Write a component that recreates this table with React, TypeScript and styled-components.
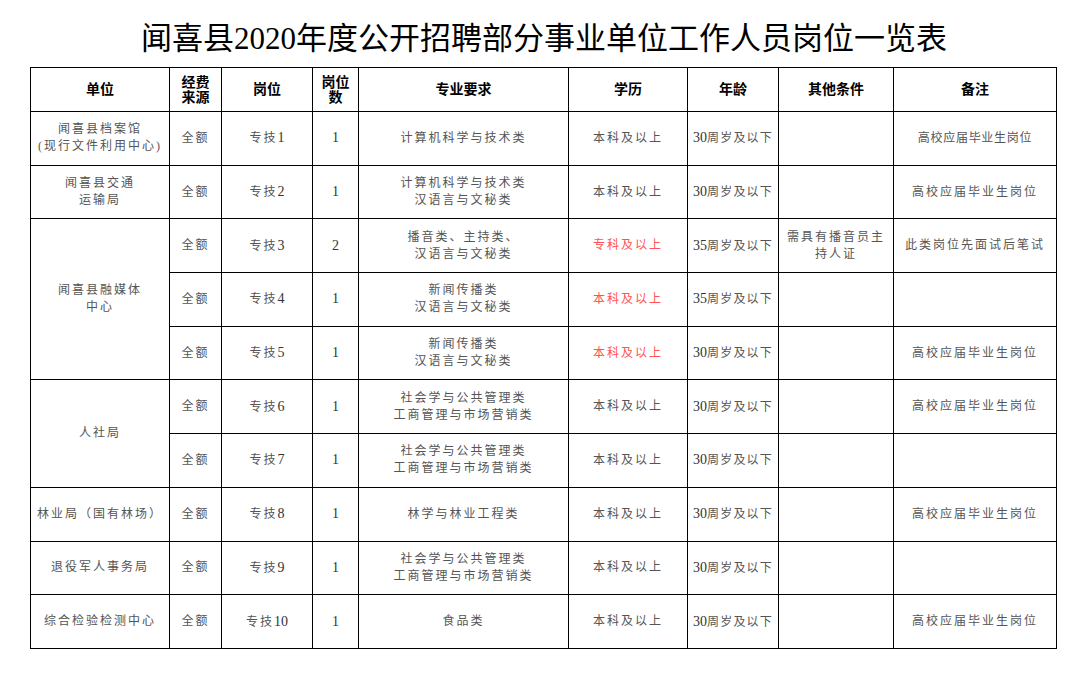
import React from 'react';
import styled, { createGlobalStyle } from 'styled-components';

type Row = {
  unit?: string[];
  span?: number;
  post: string;
  num: string;
  major: string[];
  edu: string;
  red?: boolean;
  age: string;
  other?: string[];
  note?: string;
  tight?: boolean;
};

const cols = [139, 52, 91, 46, 210, 119, 91, 115, 163];
const heads = [['单位'], ['经费', '来源'], ['岗位'], ['岗位', '数'], ['专业要求'], ['学历'], ['年龄'], ['其他条件'], ['备注']];

const soc = ['社会学与公共管理类', '工商管理与市场营销类'];
const news = ['新闻传播类', '汉语言与文秘类'];
const grad = '高校应届毕业生岗位';

const rows: Row[] = [
  { unit: ['闻喜县档案馆', '(现行文件利用中心)'], post: '专技1', num: '1', major: ['计算机科学与技术类'], edu: '本科及以上', age: '30周岁及以下', note: grad, tight: true },
  { unit: ['闻喜县交通', '运输局'], post: '专技2', num: '1', major: ['计算机科学与技术类', '汉语言与文秘类'], edu: '本科及以上', age: '30周岁及以下', note: grad },
  { unit: ['闻喜县融媒体', '中心'], span: 3, post: '专技3', num: '2', major: ['播音类、主持类、', '汉语言与文秘类'], edu: '专科及以上', red: true, age: '35周岁及以下', other: ['需具有播音员主', '持人证'], note: '此类岗位先面试后笔试' },
  { post: '专技4', num: '1', major: news, edu: '本科及以上', red: true, age: '35周岁及以下' },
  { post: '专技5', num: '1', major: news, edu: '本科及以上', red: true, age: '30周岁及以下', note: grad },
  { unit: ['人社局'], span: 2, post: '专技6', num: '1', major: soc, edu: '本科及以上', age: '30周岁及以下', note: grad },
  { post: '专技7', num: '1', major: soc, edu: '本科及以上', age: '30周岁及以下' },
  { unit: ['林业局（国有林场）'], post: '专技8', num: '1', major: ['林学与林业工程类'], edu: '本科及以上', age: '30周岁及以下', note: grad },
  { unit: ['退役军人事务局'], post: '专技9', num: '1', major: soc, edu: '本科及以上', age: '30周岁及以下' },
  { unit: ['综合检验检测中心'], post: '专技10', num: '1', major: ['食品类'], edu: '本科及以上', age: '30周岁及以下', note: grad },
];

// digits are set in a larger serif, like the source sheet
const Text = ({ value }: { value?: string }) => (
  <>
    {(value || '').split(/(\d+)/).map((part, i) =>
      /^\d+$/.test(part) ? <Num key={i}>{part}</Num> : <React.Fragment key={i}>{part}</React.Fragment>
    )}
  </>
);

const Lines = ({ items }: { items?: string[] }) => (
  <>
    {(items || []).map((t, i) => (
      <Line key={i}>{t}</Line>
    ))}
  </>
);

const App = () => {
  return (
    <Page>
      <GlobalStyle />
      <Title>闻喜县2020年度公开招聘部分事业单位工作人员岗位一览表</Title>
      <Table>
        <colgroup>
          {cols.map((w, i) => (
            <col key={i} style={{ width: w }} />
          ))}
        </colgroup>
        <thead>
          <HeadRow>
            {heads.map((h, i) => (
              <Th key={i}>
                <Lines items={h} />
              </Th>
            ))}
          </HeadRow>
        </thead>
        <tbody>
          {rows.map((r, i) => (
            <BodyRow key={i}>
              {r.unit && (
                <Td rowSpan={r.span || 1}>
                  <Lines items={r.unit} />
                </Td>
              )}
              <Td>全额</Td>
              <Td>
                <Text value={r.post} />
              </Td>
              <Td>
                <Text value={r.num} />
              </Td>
              <Td>
                <Lines items={r.major} />
              </Td>
              <Td $red={r.red}>{r.edu}</Td>
              <Td $narrow>
                <Text value={r.age} />
              </Td>
              <Td>
                <Lines items={r.other} />
              </Td>
              <Td $tight={r.tight}>{r.note}</Td>
            </BodyRow>
          ))}
        </tbody>
      </Table>
    </Page>
  );
};

export default App;

const GlobalStyle = createGlobalStyle`
  body {
    margin: 0;
    background: #fff;
    font-family: "Liberation Serif", "Noto Sans CJK SC", serif;
  }
`;

const Page = styled.div`
  width: 1079px;
  height: 678px;
  padding: 0 23px 0 30px;
  box-sizing: border-box;
`;

const Title = styled.h1`
  margin: 0;
  height: 67px;
  display: flex;
  align-items: center;
  justify-content: center;
  padding: 4px 0 0 2px;
  box-sizing: border-box;
  font-size: 31px;
  font-weight: 400;
  color: #000;
  font-family: "Liberation Serif", "Noto Sans CJK SC", serif;
`;

const Table = styled.table`
  border-collapse: collapse;
  table-layout: fixed;
  width: 1026px;
`;

const HeadRow = styled.tr`
  height: 44px;
`;

const BodyRow = styled.tr`
  height: 53.7px;
`;

const Th = styled.th`
  border: 1.5px solid #000;
  padding: 0;
  font-size: 14px;
  font-weight: 700;
  line-height: 15px;
  color: #000;
  text-align: center;
  vertical-align: middle;
`;

const Td = styled.td<{ $red?: boolean; $narrow?: boolean; $tight?: boolean }>`
  border: 1.5px solid #000;
  padding: 0;
  font-size: 12px;
  line-height: 17px;
  letter-spacing: ${(p) => (p.$tight ? '0.7px' : p.$narrow ? '1.2px' : '2px')};
  color: ${(p) => (p.$red ? '#ff5252' : '#555')};
  text-align: center;
  vertical-align: middle;
  white-space: nowrap;
`;

const Num = styled.span`
  font-size: 14px;
  letter-spacing: 0;
  color: #333;
`;

const Line = styled.div`
  display: block;
`;
